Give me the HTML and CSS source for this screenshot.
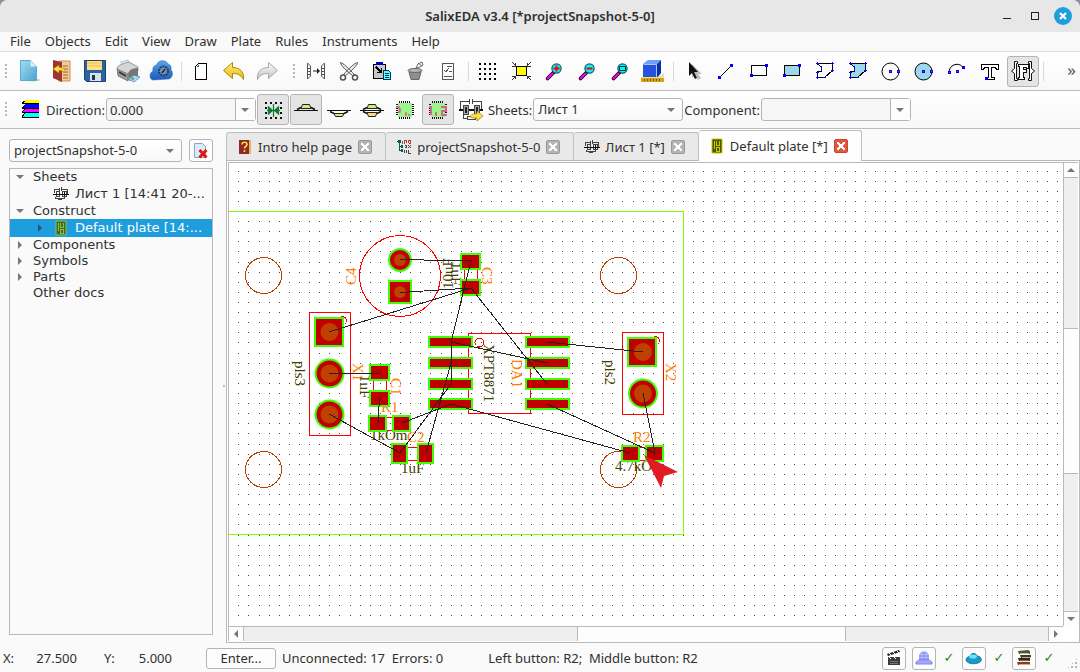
FILE: index.html
```html
<!DOCTYPE html>
<html lang="en">
<head>
<meta charset="utf-8">
<title>SalixEDA v3.4 [*projectSnapshot-5-0]</title>
<link rel="stylesheet" href="styles.css">
</head>
<body>
<svg class="defs" aria-hidden="true">
  <defs>
    <linearGradient id="gBlue" x1="0" y1="0" x2="1" y2="1"><stop offset="0" stop-color="#a5dcf0"/><stop offset="1" stop-color="#4ba3cf"/></linearGradient>
    <linearGradient id="gCloud" x1="0" y1="0" x2="0" y2="1"><stop offset="0" stop-color="#5ba4e8"/><stop offset="1" stop-color="#1c5bb8"/></linearGradient>
    <linearGradient id="gGold" x1="0" y1="0" x2="0" y2="1"><stop offset="0" stop-color="#fff27a"/><stop offset="1" stop-color="#e9b80c"/></linearGradient>
    <linearGradient id="gSilver" x1="0" y1="0" x2="0" y2="1"><stop offset="0" stop-color="#fafafa"/><stop offset="1" stop-color="#c4c4c4"/></linearGradient>
    <symbol id="schema" viewBox="0 0 24 24">
      <g fill="none" stroke="#444" shape-rendering="crispEdges"><path d="M1.500 12v-8.500h9M13.500 3.500h9v8.500M10.500 1v5M13.500 1v5"/><path d="M4.500 7.500h5v9h-5zM15.500 7.500h5v9h-5z" fill="#aaa"/><path d="M7 9v6M18 9v6" stroke-width="2" stroke="#222"/><path d="M0 12h4M10 12h5M21 12h3" stroke="#111" stroke-width="2"/><path d="M4.500 17v3h3M20.500 17v3h-3M8.500 18.500h8v3h-8z"/></g>
    </symbol>
    <symbol id="schemaSmall" viewBox="0 0 16 16">
      <g fill="none" stroke="#444" shape-rendering="crispEdges"><path d="M1.500 7V3.500h5M8.500 3.500h6V8M6.500 2v3M8.500 1v4"/><path d="M3.500 5.500h3v5h-3zM9.500 5.500h4v5h-4z"/><path d="M0 8.500h16M11.500 6v4" stroke="#111"/><path d="M2.500 10.500v2h9v-2M5 13.500h4"/></g>
    </symbol>
    <symbol id="board" viewBox="0 0 16 16">
      <path d="M3 1h10v14H3z"/><path d="M5.500 3v8M7.500 3v4h2M10.500 3v5M7 9.500h4M7.500 10v3h3v-3" fill="none" class="tracks" shape-rendering="crispEdges"/>
    </symbol>
    <symbol id="zoomer" viewBox="0 0 24 24">
      <path d="M11.500 13.500l-6 6" stroke="#000" stroke-width="3.600" stroke-linecap="round"/><path d="M10.500 14.500l-5 5" stroke="#f0f" stroke-width="2" stroke-linecap="round"/><circle cx="14.500" cy="9.500" r="4.600" fill="#00f6ff" stroke="#105a60" stroke-width="1.200"/>
    </symbol>
    <symbol id="chip" viewBox="0 0 24 24">
      <path d="M6.500 3v18M8.500 3v18M10.500 3v18M12.500 3v18M14.500 3v18M16.500 3v18M3 6.500h18M3 8.500h18M3 10.500h18M3 12.500h18M3 14.500h18M3 16.500h18" stroke="#111" shape-rendering="crispEdges"/><path d="M5 5h14v14H5z" fill="#9cf58c"/>
    </symbol>
  </defs>
</svg>
<div class="window">
  <header class="titlebar">
    <h1>SalixEDA v3.4 [*projectSnapshot-5-0]</h1>
    <div class="winbtns">
      <button aria-label="Minimize"><svg width="18" height="18"><path d="M5 11.500h8" stroke="#222" shape-rendering="crispEdges"/></svg></button>
      <button aria-label="Maximize"><svg width="18" height="18"><path d="M5.500 5.500h7v7h-7z" fill="none" stroke="#222" shape-rendering="crispEdges"/></svg></button>
      <button aria-label="Close"><svg width="18" height="18"><circle cx="9" cy="9" r="9" fill="#1f9ede"/><path d="M6 6l6 6M12 6l-6 6" stroke="#fff" stroke-width="2.200"/></svg></button>
    </div>
  </header>
  <nav class="menubar">
    <button>File</button><button>Objects</button><button>Edit</button><button>View</button><button>Draw</button><button>Plate</button><button>Rules</button><button>Instruments</button><button>Help</button>
  </nav>

  <div class="toolbar" role="toolbar" aria-label="Main">
    <span class="handle first"></span>
    <button class="tool" aria-label="New"><svg viewBox="0 0 24 24"><ellipse cx="15" cy="21" rx="8" ry="1.500" fill="#ccc"/><path d="M3.500 1.500h10l6 6v14h-16z" fill="url(#gBlue)" stroke="#5aa9ce"/><path d="M13.500 1.500v6h6z" fill="#d8f1fa"/></svg></button>
    <button class="tool" aria-label="Close project"><svg viewBox="0 0 24 24"><path d="M9 2h11v20H9z" fill="#efcb96" stroke="#c98f56"/><path d="M13 7h5M13 10h5M13 13h5M13 16h5M13 19h5" stroke="#a8652e"/><path d="M3 1l9 2v20l-9-4z" fill="#9e3434"/><path d="M3 10l6-4v2.500c4 0 6 1 6 5.500-2-2.500-3-2.500-6-2.500V14z" fill="#ffe235" stroke="#b08808" stroke-width=".6"/></svg></button>
    <button class="tool" aria-label="Save"><svg viewBox="0 0 24 24"><path d="M1.500 1.500h21v21h-19l-2-2z" fill="#2a64a0" stroke="#1b4270"/><path d="M4 2h15v9H4z" fill="#ffe086"/><path d="M4 4h15M4 7h15" stroke="#f3bd4a"/><path d="M7 14h11v8H7z" fill="#d9e2e8"/><path d="M9 16h3v5H9z" fill="#1b3550"/></svg></button>
    <button class="tool" aria-label="Print"><svg viewBox="0 0 24 24"><path d="M6 9L5 3l7-2 2 6z" fill="#e3f2fd" stroke="#8fb5d0" stroke-width=".7"/><path d="M1 10c0-3 3-4 8-6l4-1 9 5v4l-9 6z" fill="#d5d5d5" stroke="#777" stroke-width=".7"/><path d="M1 10l11 5v7L2 17z" fill="#9b9b9b" stroke="#666" stroke-width=".7"/><path d="M12 15c1-4 4-6 10-6v8l-9 5z" fill="#777"/><path d="M3 13l7 4" stroke="#333" stroke-width="1.500"/><path d="M12 20l6-4 6 2-6 5z" fill="#a8d8f5" stroke="#4b6eb3" stroke-width=".7"/><path d="M15 19l3 1" stroke="#49b349" stroke-width="2"/></svg></button>
    <button class="tool" aria-label="Cloud"><svg viewBox="0 0 24 24"><path d="M4 21c-4-1-4-7 0-9-1-4 2-6 4-6 0-5 9-6 11-1 4 1 3 5 3 6 3 3 1 9-3 9z" fill="url(#gCloud)" stroke="#2e6dbd" stroke-width=".6"/><circle cx="14.500" cy="12" r="4.500" fill="#7793b5" stroke="#1c3a60" stroke-width="2" stroke-dasharray="2 .8"/><path d="M13 14l3-4" stroke="#15345f" stroke-width="1.800"/></svg></button>
    <span class="sep"></span>
    <button class="tool" aria-label="Page"><svg viewBox="0 0 24 24" shape-rendering="crispEdges"><path d="M9.500 4.500h8v16h-11v-13z" fill="#fff" stroke="#000"/><path d="M7 8l3-3v3z" fill="#088"/></svg></button>
    <button class="tool" aria-label="Undo"><svg viewBox="0 0 24 24"><path d="M1.500 11.500l9-8v5c7 0 12 4 11 12-3-5-6-6-11-6v5z" fill="url(#gGold)" stroke="#a98a08"/></svg></button>
    <button class="tool" aria-label="Redo"><svg viewBox="0 0 24 24"><path d="M22.500 11.500l-9-8v5c-7 0-12 4-11 12 3-5 6-6 11-6v5z" fill="url(#gSilver)" stroke="#aaa"/></svg></button>
    <span class="handle"></span>
    <button class="tool" aria-label="Mirror"><svg viewBox="0 0 24 24" fill="none" stroke="#555"><path d="M3.500 4v16M6.500 7v10M20.500 4v16M17.500 7v10M3.500 4l3 3M3.500 20l3-3M20.500 4l-3 3M20.500 20l-3-3"/><path d="M4 9.500h2M4 12.500h2M4 15.500h2M18 9.500h2M18 12.500h2M18 15.500h2"/><path d="M9 12h5" stroke="#222"/><path d="M13 9l3 3-3 3z" fill="#222" stroke="none"/></svg></button>
    <button class="tool" aria-label="Cut"><svg viewBox="0 0 24 24" fill="#eee" stroke="#555"><path d="M3.500 3.500c0 3 6 8 12 13l2-1C12 10 6 4 3.500 3.500zM20.500 3.500c0 3-6 8-12 13l-2-1c5-5.500 11-11.500 14-12z"/><circle cx="6" cy="18.500" r="2.500" fill="none" stroke-width="1.500"/><circle cx="18" cy="18.500" r="2.500" fill="none" stroke-width="1.500"/></svg></button>
    <button class="tool" aria-label="Paste"><svg viewBox="0 0 24 24" shape-rendering="crispEdges"><path d="M3.500 5.500h12v14h-12z" fill="#c8c8c8" stroke="#000"/><path d="M6 3h7v3H6z" fill="#00c"/><path d="M6 8l5 5M11.500 9v4.500H7" stroke="#000" stroke-width="1.500" fill="none"/><path d="M13.500 11.500h5l2 2v7h-7z" fill="#5ff" stroke="#035"/><path d="M15 14.500h4M15 16.500h4M15 18.500h4" stroke="#036"/></svg></button>
    <button class="tool" aria-label="Delete"><svg viewBox="0 0 24 24" fill="#b5b5b5" stroke="#666"><path d="M6 13h12l-2 7.500H8z" fill="#8f8f8f"/><ellipse cx="12" cy="11.500" rx="7" ry="2" /><path d="M13 9l2-4 4-2 1 3-3 2-4 1" fill="#fff"/><path d="M15 4l4 3"/></svg></button>
    <button class="tool" aria-label="Properties"><svg viewBox="0 0 24 24" shape-rendering="crispEdges" fill="none" stroke="#555"><path d="M6.500 4.500h11v16h-11zM11 7.500h5M8 11l2 2 3-4M13 12.500h3M8 17.500h8"/></svg></button>
    <span class="sep"></span>
    <button class="tool" aria-label="Grid"><svg viewBox="0 0 24 24" shape-rendering="crispEdges"><path d="M3 5h18M3 10h18M3 15h18M3 20h18" stroke="#000" stroke-width="2" stroke-dasharray="2 3"/></svg></button>
    <button class="tool" aria-label="Fit page"><svg viewBox="0 0 24 24" shape-rendering="crispEdges"><path d="M7.500 7.500h10v9h-10z" fill="#ff0" stroke="#000"/><path d="M3 3l4 4M22 3l-4 4M3 21l4-4M22 21l-4-4M6.500 4v3H3M18.500 4v3h3M6.500 20v-3H3M18.500 20v-3h3" fill="none" stroke="#333"/></svg></button>
    <button class="tool" aria-label="Zoom in"><svg viewBox="0 0 24 24"><use href="#zoomer"/><path d="M11.500 9.500h6M14.500 6.500v6" stroke="#f00" stroke-width="2"/></svg></button>
    <button class="tool" aria-label="Zoom out"><svg viewBox="0 0 24 24"><use href="#zoomer"/><path d="M11.500 9.500h6" stroke="#f00" stroke-width="2"/></svg></button>
    <button class="tool" aria-label="Zoom window"><svg viewBox="0 0 24 24"><use href="#zoomer"/><path d="M11.500 7.500h6v4h-6z" stroke="#033" fill="none"/></svg></button>
    <button class="tool" aria-label="3D"><svg viewBox="0 0 24 24"><path d="M17 18l6-4v4z" fill="#ddd"/><path d="M2 5l5-4h13l-4 4z" fill="#6f9cff"/><path d="M2 5h14v14H2z" fill="#2451e0"/><path d="M16 5l4-4v13l-4 5z" fill="#0b2fa5"/><path d="M2.500 5.500h13M15.500 5.500v13" stroke="#a9c4ff" fill="none"/><path d="M0 18h23v5H0z" fill="#d8a21a"/><path d="M0 18.500h23" stroke="#f7de78"/><path d="M3 21h18" stroke="#7b5800" stroke-dasharray="1 2" stroke-width="2"/></svg></button>
    <span class="sep"></span>
    <button class="tool" aria-label="Select"><svg viewBox="0 0 24 24"><path d="M11 5v14l3-3 3 5 3-2-3-4h4z" fill="#bbb"/><path d="M8 3v14l3-3 3 6 2-1-3-6h4z" fill="#111"/></svg></button>
    <button class="tool" aria-label="Line"><svg viewBox="0 0 24 24" shape-rendering="crispEdges"><path d="M6 18L18 6" stroke="#000"/><path d="M4 17h3v3H4zM16 5h3v3h-3z" fill="#00f"/></svg></button>
    <button class="tool" aria-label="Rectangle"><svg viewBox="0 0 24 24" shape-rendering="crispEdges"><path d="M4.500 6.500h15v10h-15z" fill="none" stroke="#000"/><path d="M3 15h3v3H3zM18 5h3v3h-3z" fill="#00f"/></svg></button>
    <button class="tool" aria-label="Filled rectangle"><svg viewBox="0 0 24 24" shape-rendering="crispEdges"><path d="M4.500 6.500h15v10h-15z" fill="#9bd9ea" stroke="#000"/><path d="M3 15h3v3H3zM18 5h3v3h-3z" fill="#00f"/></svg></button>
    <button class="tool" aria-label="Polyline"><svg viewBox="0 0 24 24" shape-rendering="crispEdges"><path d="M4.500 4.500h15v7l-8 7h-7v-6h4v-4z" fill="none" stroke="#000"/><path d="M3 4.500h3M4.500 3v3M18 4.500h3M19.500 3v3M18 11.500h3M19.500 10v3M10 18.500h3M3 18.500h3M4.500 17v3M3 13.500h3M8.500 7v5" stroke="#00f"/></svg></button>
    <button class="tool" aria-label="Polygon"><svg viewBox="0 0 24 24" shape-rendering="crispEdges"><path d="M4.500 4.500h15v7l-8 7h-7v-6h4v-4z" fill="#9bd9ea" stroke="#000"/><path d="M3 4.500h3M4.500 3v3M18 4.500h3M19.500 3v3M18 11.500h3M19.500 10v3M10 18.500h3M3 18.500h3M4.500 17v3M3 13.500h3M8.500 7v5" stroke="#00f"/></svg></button>
    <button class="tool" aria-label="Circle"><svg viewBox="0 0 24 24"><circle cx="11.500" cy="12.500" r="8.500" fill="none" stroke="#000"/><path d="M10 11h3v3h-3zM18 11h3v3h-3z" fill="#00f"/><path d="M11 12h1v1h-1zM19 12h1v1h-1z" fill="#f33"/></svg></button>
    <button class="tool" aria-label="Filled circle"><svg viewBox="0 0 24 24"><circle cx="11.500" cy="12.500" r="8.500" fill="#9bd9ea" stroke="#000"/><path d="M10 11h3v3h-3zM18 11h3v3h-3z" fill="#00f"/><path d="M11 12h1v1h-1zM19 12h1v1h-1z" fill="#f33"/></svg></button>
    <button class="tool" aria-label="Arc"><svg viewBox="0 0 24 24"><path d="M4 14c0-10 12-11 14-5" fill="none" stroke="#000"/><path d="M3 12h3v3H3zM11 11h3v3h-3zM17 7h3v3h-3z" fill="#00f"/><path d="M4 13h1v1H4zM12 12h1v1h-1z" fill="#f33"/></svg></button>
    <button class="tool" aria-label="Text"><svg viewBox="0 0 24 24" shape-rendering="crispEdges"><path d="M3.500 5.500h17v5h-2l-1-2h-4v10h3v2h-8v-2h2v-10h-4l-1 2h-2z" fill="#fff" stroke="#000"/><path d="M7 18h3v3H7z" fill="#00f"/></svg></button>
    <button class="tool on" aria-label="Formula text" aria-pressed="true"><svg viewBox="0 0 24 24" fill="none" stroke="#111"><path d="M5.500 2.500h-2v7l-3 2.500 3 2.500v7h3v-2h-1v-15h1v-2zM18.500 2.500h2v7l3 2.500-3 2.500v7h-3v-2h1v-15h-1v-2z" fill="#fff"/><path d="M8 5.500h9v4h-2v-1h-3v2h3v3h-3v5h1v2H7.500v-2h1v-11H7.500z" fill="#fff" shape-rendering="crispEdges"/></svg></button>
    <span class="sep"></span>
    <button class="more" aria-label="More tools">»</button>
  </div>

  <div class="toolbar" role="toolbar" aria-label="Plate">
    <span class="handle first"></span>
    <button class="tool" aria-label="Layers"><svg viewBox="0 0 24 24" shape-rendering="crispEdges"><path d="M8 2h14v3H5z" fill="#ff0"/><path d="M8 6h14v4H5z" fill="#00f"/><path d="M8 11h14v3H5z" fill="#f0f"/><path d="M8 15h14v4H5z" fill="#0ff"/><path d="M5 5.500h17M5 10.500h17M5 14.500h17M5 19.500h17M5 5l3-2M5 10l3-3M5 14l3-3M5 19l3-4" stroke="#000" fill="none"/></svg></button>
    <label for="dir">Direction:</label>
    <span class="combo"><input id="dir" type="text" value="0.000"><button aria-label="Direction list"><i class="tri down"></i></button></span>
    <button class="tool on" aria-label="Snap" aria-pressed="true"><svg viewBox="0 0 24 24"><path d="M4 5h18M4 20h18M4 10h2M19 10h2M4 15h2M19 15h2" stroke="#111" stroke-width="2" stroke-dasharray="2 3" shape-rendering="crispEdges"/><path d="M12.500 6v13M6 12.500h13M7.500 9l4 3.500-4 3.500zM17.500 9l-4 3.500 4 3.500z" stroke="#0a7a2e" stroke-width="1.200" fill="#0a8a36"/></svg></button>
    <button class="tool on" aria-label="Top side" aria-pressed="true"><svg viewBox="0 0 24 24"><path d="M0 12.500h24" stroke="#111" shape-rendering="crispEdges"/><path d="M3 11.500l4-2M17 9.500l4 2" stroke="#111" stroke-width="1.500"/><path d="M8.500 6.500h7l1.500 4H7z" fill="#c8f07a" stroke="#222"/></svg></button>
    <button class="tool" aria-label="Bottom side"><svg viewBox="0 0 24 24"><path d="M0 12.500h24" stroke="#111" shape-rendering="crispEdges"/><path d="M3 13.500l4 2M17 15.500l4-2" stroke="#111" stroke-width="1.500"/><path d="M7 15.500h10l-1.500 3h-7z" fill="#c8f07a" stroke="#222"/></svg></button>
    <button class="tool" aria-label="Both sides"><svg viewBox="0 0 24 24"><path d="M0 12.500h24" stroke="#111" shape-rendering="crispEdges"/><path d="M3 11.500l4-2M17 9.500l4 2M3 13.500l4 2M17 15.500l4-2" stroke="#111" stroke-width="1.500"/><path d="M8.500 6.500h7l1.500 4H7z" fill="#c8f07a" stroke="#222"/><path d="M7 14.500h10l-1.500 4h-7z" fill="#ffd97a" stroke="#222"/></svg></button>
    <button class="tool" aria-label="Part"><svg viewBox="0 0 24 24"><use href="#chip"/><path d="M3 9h3v2h1v3H5M12 15h1v2h-1M15 17h2" stroke="#d8608a" fill="none" stroke-width="1.500"/></svg></button>
    <button class="tool on" aria-label="Part numbers" aria-pressed="true"><svg viewBox="0 0 24 24"><use href="#chip"/><path d="M3 9h2v8M10 14v4M15 9h5v4h-4v4h5" stroke="#d8608a" fill="none" stroke-width="1.800"/></svg></button>
    <button class="tool" aria-label="Import schematic"><svg viewBox="0 0 24 24"><use href="#schema"/><path d="M11 19c2-4 5-3 7-3v-3l6 5-6 5v-3c-3 0-5 0-7-1z" fill="#ffe040" stroke="#97780a" stroke-width=".7"/></svg></button>
    <label for="sheets">Sheets:</label>
    <span class="pick"><select id="sheets"><option>Лист 1</option></select><i class="tri down"></i></span>
    <label for="comp">Component:</label>
    <span class="combo off"><input id="comp" type="text" disabled><button aria-label="Component list"><i class="tri down"></i></button></span>
  </div>

  <main class="main">
    <aside class="side">
      <div class="project">
        <span class="pick"><select aria-label="Project"><option>projectSnapshot-5-0</option></select><i class="tri down"></i></span>
        <button class="small" aria-label="Close project"><svg viewBox="0 0 18 18"><path d="M2.500 1.500h8l3 3v11h-11z" fill="#dceaf8" stroke="#8ba6c4"/><path d="M7.500 8l7 7.500M14.500 8l-7 7.500" stroke="#d81818" stroke-width="3"/></svg></button>
      </div>
      <ul class="tree">
        <li><i class="tri down"></i><span>Sheets</span></li>
        <li class="child"><i class="tri none"></i><svg class="ico"><use href="#schemaSmall"/></svg><span>Лист 1 [14:41 20-...</span></li>
        <li><i class="tri down"></i><span>Construct</span></li>
        <li class="child chosen"><i class="tri right"></i><svg class="ico plate"><use href="#board"/></svg><span>Default plate [14:...</span></li>
        <li><i class="tri right"></i><span>Components</span></li>
        <li><i class="tri right"></i><span>Symbols</span></li>
        <li><i class="tri right"></i><span>Parts</span></li>
        <li><i class="tri none"></i><span>Other docs</span></li>
      </ul>
    </aside>
    <div class="splitter"></div>
    <section class="work">
      <div class="tabs" role="tablist">
        <div class="tab" role="tab"><svg class="ico" viewBox="0 0 16 16"><path d="M2 1h10l2 1v13H2z" fill="#8c2a2a"/><path d="M12 1l2 1v13h-2z" fill="#e7b36c"/><path d="M5 5.500c0-3 5-3 5 0 0 2-2.500 1.500-2.500 4M7.500 11v2" stroke="#ffe32e" stroke-width="1.600" fill="none"/></svg><span>Intro help page</span><button class="x" aria-label="Close tab"></button></div>
        <div class="tab" role="tab"><svg class="ico" viewBox="0 0 16 16" fill="none" shape-rendering="crispEdges"><path d="M1 2.500h3M3.500 2v10M3 7.500h3M3 11.500h4" stroke="#0a5a5a"/><path d="M6.500 2v3M8.500 5V1.500h2V4M12.500 4V1.500h2V4h-2" stroke="#b04040"/><path d="M8.500 6.500h2v2h-2M12 6l3 3M15 6l-3 3M8.500 11v3M10.500 11v3M12.500 11v3h2" stroke="#444"/><path d="M2 1h3v3H2zM5 6h2v3H5zM5 10h2v3H5z" fill="#0a5a5a"/></svg><span>projectSnapshot-5-0</span><button class="x" aria-label="Close tab"></button></div>
        <div class="tab" role="tab"><svg class="ico"><use href="#schemaSmall"/></svg><span>Лист 1 [*]</span><button class="x" aria-label="Close tab"></button></div>
        <div class="tab current" role="tab" aria-selected="true"><svg class="ico plate olive"><use href="#board"/></svg><span>Default plate [*]</span><button class="x" aria-label="Close tab"></button></div>
      </div>
      <div class="pane">
        <div class="area">
          <svg class="scene" aria-label="Plate drawing">
            <path id="grid" class="grid"/>
            <g transform="translate(-229 -163)">
              <path class="edge" d="M200 211.500H683.500V534.500H200"/>
              <g class="hole"><circle cx="263.500" cy="275.500" r="18"/><circle cx="618.500" cy="275.500" r="18"/><circle cx="263.500" cy="469.500" r="18"/><circle cx="618.500" cy="469.500" r="18"/></g>
              <g class="orange">
                <text transform="translate(356 285) rotate(-90)">C4</text>
                <text transform="translate(482 267) rotate(90)">C3</text>
                <text transform="translate(353 363) rotate(90)">X1</text>
                <text transform="translate(391 378) rotate(90)">C1</text>
                <text x="381" y="412">R1</text><text x="407" y="442">C2</text><text x="633" y="442">R2</text>
                <text transform="translate(512 359) rotate(90)">DA1</text>
                <text transform="translate(666 363) rotate(90)">X2</text>
              </g>
              <g class="olive-text">
                <text transform="translate(453 289) rotate(-90)">10uF</text>
                <text transform="translate(451 262) rotate(90)">1uF</text>
                <text transform="translate(295 361) rotate(90)">pls3</text>
                <text transform="translate(360 375) rotate(90)">1uF</text>
                <text x="370" y="440">1kOm</text><text x="401" y="473">1uF</text><text x="615" y="471">4.7kOm</text>
                <text transform="translate(484 344) rotate(90)">XPT8871</text>
                <text transform="translate(605 360) rotate(90)">pls2</text>
              </g>
              <g class="outline">
                <circle cx="400" cy="276" r="40.500"/><path d="M309.500 312.500h41v123h-41zM622.500 332.500h41v82h-41zM468.500 333.500h62v80h-62z"/>
                <circle cx="342.500" cy="320.500" r="4"/><circle cx="655.500" cy="340.500" r="4"/><circle cx="479.500" cy="342.500" r="4.500"/>
                <path d="M464.500 270v9M477.500 270v9M373.500 381v9M386.500 381v9M387 417.500h5M387 430.500h5M408 447.500h9M408 460.500h9M640 447.500h5M640 460.500h5"/>
              </g>
              <g class="pad">
                <circle cx="400" cy="260" r="11"/><path d="M389 281h22v22h-22zM461 254h19v15h-19zM461 280h19v15h-19z"/>
                <path d="M315 318h28v28h-28z"/><circle cx="329.500" cy="373.500" r="14"/><circle cx="329.500" cy="414.500" r="14"/>
                <path d="M370 365h19v15h-19zM370 391h19v15h-19zM369 416h17v15h-17zM393 416h17v15h-17zM392 444h15v19h-15zM418 444h15v19h-15z"/>
                <path d="M429 337h43v10h-43zM429 358h43v10h-43zM429 379h43v10h-43zM429 399h43v10h-43zM526 337h43v10h-43zM526 358h43v10h-43zM526 379h43v10h-43zM526 399h43v10h-43z"/>
                <path d="M628 338h28v28h-28z"/><circle cx="643" cy="393.500" r="14"/><path d="M622 446h17v15h-17zM646 446h17v15h-17z"/>
              </g>
              <g class="bore"><circle cx="400" cy="260" r="6"/><circle cx="400" cy="292" r="6"/><circle cx="329.500" cy="332" r="9"/><circle cx="329.500" cy="373.500" r="9"/><circle cx="329.500" cy="414.500" r="9"/><circle cx="643" cy="352" r="9"/><circle cx="643" cy="393.500" r="9"/></g>
              <path class="wire" d="M400 259.500L471 261L451 342V384L400 453L329 414M400 292.500L471 288L329 332M471 288L547 384M426 453L451 363M451 342L547 363M547 342L643 352M547 404L655 453L643 393M630 453L451 404L402 423M379.500 398L378 423M329 373.500H380"/>
              <path class="pointer" d="M644 455l34 17-14 4-3 12z"/>
            </g>
          </svg>
          <div class="bar vert"><button aria-label="Scroll up"><i class="tri up"></i></button><span class="groove a"></span><span class="thumb"></span><span class="groove b"></span><button aria-label="Scroll down"><i class="tri down"></i></button></div>
          <div class="bar horz"><button aria-label="Scroll left"><i class="tri left"></i></button><span class="groove a"></span><span class="thumb"></span><span class="groove b"></span><button aria-label="Scroll right"><i class="tri right"></i></button></div>
        </div>
      </div>
    </section>
  </main>

  <footer class="status">
    <span class="axis">X:</span><span class="coord">27.500</span><span class="axis">Y:</span><span class="coord">5.000</span>
    <button class="enter">Enter...</button>
    <span class="info">Unconnected: 17&nbsp; Errors: 0</span>
    <span class="hint">Left button: R2;&nbsp; Middle button: R2</span>
    <div class="tray">
      <button class="small" aria-label="Record"><svg viewBox="0 0 18 18"><path d="M3 8h12v8H3z" fill="#3b3b3b"/><path d="M2 5l12-4 1 2-12 4z" fill="#222"/><path d="M4 4l2 2M8 3l2 2M12 2l2 2M4 8l2 2M9 8l2 2" stroke="#fff"/><path d="M5 12.500h8M5 14.500h8" stroke="#777"/></svg></button>
      <button class="small" aria-label="Server"><svg viewBox="0 0 18 18"><path d="M4 12V7c1-6 9-6 10 0v5z" fill="#8f94f2"/><path d="M4.500 5.500h9M4 8.500h10M7 2v10M11 2v10" stroke="#c7caff" stroke-width=".7"/><path d="M1 13l3-2h10l3 2v2H1z" fill="#a3a8fb" stroke="#8085e8"/></svg></button><span class="ok">✓</span>
      <button class="small" aria-label="Cloud"><svg viewBox="0 0 18 18"><path d="M4 14c-5-2-3-6 1-7 2-4 6-3 7 0 5 0 6 6 1 7-3 1-6 1-9 0z" fill="#169cc9" stroke="#0d6288" stroke-width=".8"/><ellipse cx="8" cy="7.500" rx="4" ry="2" fill="#6be5f5"/></svg></button><span class="ok">✓</span>
      <button class="small" aria-label="Library"><svg viewBox="0 0 18 18"><path d="M3 2l10-1 2 1v3H4z" fill="#4b5a36"/><path d="M5 6h11v3H6z" fill="#42352c"/><path d="M3 9h12v3H4z" fill="#2c2a20"/><path d="M2 13h13v3H3z" fill="#97322f"/><path d="M5 4.500h9M7 8.500h9M5 12h9M4 15.500h12" stroke="#e6cf9e" stroke-width=".8"/></svg></button><span class="ok">✓</span>
      <span class="grip"></span>
    </div>
  </footer>
</div>
<script src="grid.js"></script>
</body>
</html>
```
FILE: styles.css
```css
* { box-sizing: border-box; }
html, body { height: 100%; margin: 0; }
body { background: #8d8fa8; font: 13px/18px "Noto Sans", "Open Sans", sans-serif; color: #303030; }
button, input, select { font: inherit; color: inherit; margin: 0; padding: 0; border: 0; background: none; }
button { display: flex; align-items: center; justify-content: center; flex: none; }
ul { list-style: none; margin: 0; padding: 0; }
.defs { display: block; width: 0; height: 0; position: absolute; }
.window { height: 100vh; display: flex; flex-direction: column; background: #fafafa; border-radius: 8px 8px 0 0; overflow: hidden; }

.titlebar { height: 32px; flex: none; display: grid; grid-template-columns: 1fr auto 1fr; align-items: center; background: #e7e7e7; }
.titlebar h1 { grid-column: 2; margin: 0; font-size: 13px; line-height: 18px; font-weight: 600; color: #2e2e2e; }
.winbtns { display: flex; gap: 10px; justify-content: flex-end; padding-right: 8px; }
.menubar { height: 20px; flex: none; display: flex; align-items: center; gap: 14px; padding: 0 10px 2px; border-bottom: 1px solid #dcdcdc; }

.toolbar { flex: none; height: 39px; display: flex; align-items: center; gap: 1px; border-bottom: 1px solid #bcbcbc; background: linear-gradient(#fff, #f8f8f8); white-space: nowrap; overflow: hidden; }
.toolbar + .toolbar { height: 38px; }
.handle, .grip { background: radial-gradient(circle, #b8b8b8 1px, transparent 1px) 0 0 / 4px 4px; }
.handle { width: 5px; height: 17px; margin: 0 2px 0 8px; flex: none; }
.handle.first { margin: 0 3px 0 4px; }
.sep { width: 1px; height: 19px; margin: 0 2px 0 3px; background: #d8d8d8; flex: none; }
.tool { width: 32px; height: 31px; border: 1px solid transparent; border-radius: 3px; }
.tool svg { width: 24px; height: 24px; flex: none; }
.tool.on { background: #e4e4e4; border-color: #b4b4b4; }
.more { margin-left: auto; padding: 0 4px 2px 0; font-size: 17px; color: #555; }
.toolbar .combo, .toolbar .pick { width: 150px; }

.combo, .pick { display: flex; height: 23px; border: 1px solid #b4b4b4; border-radius: 3px; background: #fff; }
.combo { background: #f6f6f6; }
.combo input { flex: 1; min-width: 0; padding: 0 3px; }
.combo button { width: 20px; border-left: 1px solid #b4b4b4; background: #fcfcfc; }
.pick { position: relative; align-items: center; background: linear-gradient(#fff, #f8f8f8); }
.pick select { appearance: none; width: 100%; height: 100%; padding: 0 20px 1px 4px; }
.pick .tri { position: absolute; right: 7px; pointer-events: none; }

.tri { display: block; width: 0; height: 0; border: 4px solid transparent; flex: none; }
.tri.down { border-top-color: #777; border-bottom-width: 0; }
.tri.up { border-bottom-color: #777; border-top-width: 0; }
.tri.right { border-left-color: #777; border-right-width: 0; margin: 0 2px; }
.tri.left { border-right-color: #777; border-left-width: 0; }

.main { flex: 1; min-height: 0; display: flex; }
.side { width: 213px; flex: none; padding: 10px 0 8px 9px; display: flex; flex-direction: column; gap: 6px; }
.project { display: flex; gap: 7px; }
.project .pick { flex: 1; }
.small { width: 24px; height: 23px; border: 1px solid #b4b4b4; border-radius: 3px; background: #fdfdfd; }
.small svg { width: 18px; height: 18px; }
.tree { flex: 1; border: 1px solid #b9b9b9; font: 13px/16px "DejaVu Sans", sans-serif; white-space: nowrap; overflow: hidden; }
.tree li { height: 16px; display: flex; align-items: center; padding-left: 6px; gap: 9px; }
.tree li.child { height: 18px; padding-left: 26px; }
.tree .child .ico { margin: 0 -3px 0 0; }
.tree .chosen { background: #1f9ede; color: #fff; }
.chosen .tri.right { border-left-color: #24557a; }
.ico { width: 16px; height: 16px; flex: none; }
.plate { fill: #3f6a28; stroke: #8fc046; }
.olive { fill: #4d5200; stroke: #c6cc00; }
.plate path:first-child { stroke: none; }
.splitter { width: 13px; flex: none; background: radial-gradient(circle, #bbb 1px, transparent 1px) right center / 4px 4px no-repeat; }

.work { flex: 1; min-width: 0; display: flex; flex-direction: column; }
.tabs { height: 32px; flex: none; display: flex; align-items: flex-end; padding-top: 1px; border-bottom: 1px solid #b9b9b9; }
.tab { height: 28px; display: flex; align-items: center; gap: 5px; padding: 0 13px 0 10px; border: 1px solid #c0c0c0; border-width: 1px 1px 0 0; background: #e9e9e9; border-radius: 3px 3px 0 0; white-space: nowrap; }
.tab:first-child { border-left-width: 1px; }
.tab.current { height: 31px; margin-bottom: -1px; background: #fefefe; }
.x { width: 14px; height: 14px; margin-left: 1px; border-radius: 2px; border: 1px solid #999; background: linear-gradient(45deg, transparent 42%, #fff 42% 58%, transparent 58%) center / 8px 8px no-repeat, linear-gradient(-45deg, transparent 42%, #fff 42% 58%, transparent 58%) center / 8px 8px no-repeat, #b5b5b5; }
.tab.current .x { background-color: #e2583c; border-color: #c9442a; }
.pane { flex: 1; min-height: 0; padding: 1px; border: 1px solid #b9b9b9; border-top: 0; background: #fff; display: flex; }
.area { flex: 1; min-width: 0; display: grid; grid-template: minmax(0, 1fr) 15px / minmax(0, 1fr) 15px; border: 1px solid #b9b9b9; border-right-width: 0; border-bottom-width: 0; }
.scene { width: 100%; height: 100%; min-height: 0; background: #fff; overflow: hidden; font: 15px "Liberation Serif", serif; }
.bar { display: flex; background: #fdfdfd; }
.bar button { width: 14px; height: 14px; }
.bar .tri { margin: 0; }
.vert { flex-direction: column; border-left: 1px solid #b9b9b9; }
.horz { border-top: 1px solid #b9b9b9; }
.groove { background: #efefef; border: 0 solid #b9b9b9; }
.vert .groove { border-width: 1px 0; }
.horz .groove { border-width: 0 1px; }
.vert .groove.a { flex: 152; } .vert .thumb { flex: 146; } .vert .groove.b { flex: 139; }
.horz .groove.a { flex: 335; } .horz .thumb { flex: 269; } .horz .groove.b { flex: 203; }

.grid { stroke: #444; shape-rendering: crispEdges; }
.edge, .hole, .outline, .wire { fill: none; stroke-width: 1; shape-rendering: crispEdges; }
.edge { stroke: #80ff00; }
.hole { stroke: #b84000; }
.outline { stroke: #f00; }
.pad { fill: #c00000; stroke: #40ff00; stroke-width: 2; }
.bore { fill: #c04000; }
.wire { stroke: #222; }
.orange { fill: #ff8000; }
.olive-text { fill: #404000; }
.pointer { fill: #e01b24; }

.status { flex: none; height: 29px; display: flex; align-items: center; padding: 1px 1px 0 3px; white-space: nowrap; }
.axis { width: 27px; }
.coord { width: 47px; text-align: right; }
.coord + .axis { margin-left: 27px; }
.coord + .axis + .coord { width: 41px; }
.enter { width: 70px; height: 21px; margin: 0 6px 0 34px; border: 1px solid #b4b4b4; border-radius: 3px; background: #fdfdfd; }
.hint { margin-left: 45px; }
.tray { margin-left: auto; display: flex; align-items: center; gap: 6px; }
.ok { width: 14px; text-align: center; color: #1a8a1a; font-family: "DejaVu Sans", sans-serif; }
.grip { width: 13px; height: 13px; margin-left: 4px; align-self: flex-end; clip-path: polygon(100% 0, 100% 100%, 0 100%); }
```
FILE: grid.js
```js
const PITCH = 10.11;
const grid = document.getElementById('grid');
const scene = grid.ownerSVGElement;

function drawGrid() {
  const { width, height } = scene.getBoundingClientRect();
  let d = '';
  for (let y = 7.6; y < height; y += PITCH) {
    for (let x = 9.3; x < width; x += PITCH) {
      d += `M${Math.round(x)} ${Math.round(y) + 0.5}h1`;
    }
  }
  grid.setAttribute('d', d);
}

drawGrid();
window.addEventListener('resize', drawGrid);
```
